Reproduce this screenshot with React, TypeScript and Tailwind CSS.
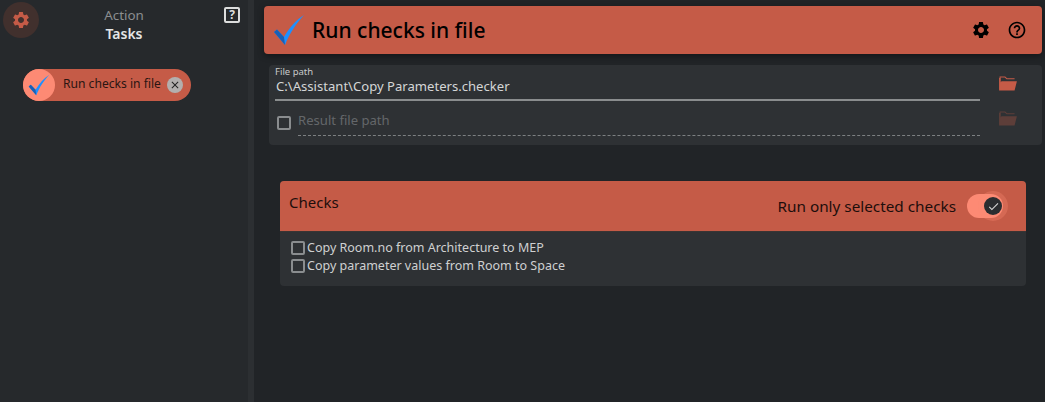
import React from "react";
import { MdSettings, MdHelpOutline, MdClose, MdCheck } from "react-icons/md";

const font = "font-['Noto_Sans','Open_Sans',sans-serif]";

const BlueCheck = ({ className }: { className: string }) => (
  <svg viewBox="0 0 32 32" className={className}>
    <path d="M1 18 L4 15.5 L11 23 C16 14 23 6 31 1 C24 9 17 18 12 31 Z" fill="#1e90ff" />
    <path d="M1 18 L4 15.5 L11 23 L12 31 Z" fill="#1a5fb4" />
  </svg>
);

const FolderIcon = ({ className }: { className: string }) => (
  <svg viewBox="0 0 20 16" className={className} fill="currentColor">
    <path d="M1 0.5 H7 L9 2.5 H17 V3.5 H8.5 L6.5 1.5 H2 V14 H1 Z" />
    <path d="M0.5 15.5 V2 H2 V7 C2.5 5.8 3 5.5 4 5.5 H19.5 L17 15.5 Z" />
  </svg>
);

const Checkbox = ({ className }: { className: string }) => (
  <span className={`block shrink-0 rounded-[2px] border-2 border-[#8a8d8f] ${className}`} />
);

const Sidebar = () => (
  <aside className="flex h-full w-[254px] shrink-0 flex-col border-r-[6px] border-[#2c2f32] bg-[#26292c]">
    <div className="flex items-start pl-[3px] pr-[8px] pt-[2px]">
      <div className="flex h-[36px] w-[36px] items-center justify-center rounded-full bg-[#41302d]">
        <MdSettings className="text-[#c55b47]" size={20} />
      </div>
      <div className="flex-1 pr-[15px] pt-[5px] text-center">
        <div className="text-[13.4px] leading-[17px] text-[#8b8e90]">Action</div>
        <div className="text-[14px] font-semibold leading-[19px] text-[#e4e5e6]">Tasks</div>
      </div>
      <div className="mt-[5px] flex h-[16px] w-[16px] items-center justify-center rounded-[2px] border-2 border-[#dcdddd] text-[12px] font-bold leading-none text-[#dcdddd]">
        ?
      </div>
    </div>
    <div className="ml-[23px] mt-[26px] flex h-[32px] w-[168px] items-center rounded-full bg-[#c55b47]">
      <div className="flex h-[32px] w-[32px] shrink-0 items-center justify-center rounded-full bg-[#fd8a74]">
        <BlueCheck className="h-[22px] w-[22px]" />
      </div>
      <span className="mb-[2px] ml-[8px] whitespace-nowrap text-[12.1px] leading-[18px] text-[#2a1512]">Run checks in file</span>
      <span className="ml-[6px] flex h-[16px] w-[16px] shrink-0 items-center justify-center rounded-full bg-[#b3afae] text-[#222]">
        <MdClose size={12} />
      </span>
    </div>
  </aside>
);

const PathPanel = () => (
  <section className="ml-[5px] mr-[3px] mt-[11px] flex h-[80px] rounded-[4px] bg-[#2e3134] pl-[6px]">
    <div className="w-[705px] pt-[1px]">
      <div className="text-[9.5px] leading-[12px] text-[#c9cacb]">File path</div>
      <div className="h-[23px] border-b-2 border-[#8a8d8e] pl-[1px] text-[13.1px] leading-[16px] text-[#d5d6d6]">
        C:\Assistant\Copy Parameters.checker
      </div>
      <div className="mt-[9px] flex items-center">
        <Checkbox className="ml-[2px] h-[14px] w-[14px]" />
        <div className="ml-[7px] h-[26px] flex-1 border-b border-dashed border-[#7d8082] text-[13.1px] leading-[20px] text-[#64676a]">
          Result file path
        </div>
      </div>
    </div>
    <div className="flex flex-col pl-[18px] pt-[11px]">
      <FolderIcon className="h-[15px] w-[20px] text-[#c55b47]" />
      <FolderIcon className="mt-[20px] h-[15px] w-[20px] text-[#5d3e39]" />
    </div>
  </section>
);

const ChecksPanel = () => (
  <section className="ml-[16px] mr-[19px] mt-[36px] overflow-hidden rounded-[4px] bg-[#2e3134]">
    <div className="flex h-[51px] items-start justify-between border-b border-[#3a3433] bg-[#c55b47] pl-[9px] pr-[23px]">
      <span className="mt-[11px] text-[15px] leading-[20px] text-[#1d0e0c]">Checks</span>
      <div className="mt-[13px] flex items-center">
        <span className="text-[15.3px] leading-[20px] text-[#1d0e0c]">Run only selected checks</span>
        <div className="relative ml-[11px] h-[24px] w-[36px] rounded-full bg-[#fd8a74]">
          <span className="absolute left-[11px] top-[-3px] h-[30px] w-[30px] rounded-full bg-[#fd8a74]/30" />
          <span className="absolute left-[17px] top-[3px] flex h-[18px] w-[18px] items-center justify-center rounded-full bg-[#2a2d30] text-[#d5d6d6]">
            <MdCheck size={13} />
          </span>
        </div>
      </div>
    </div>
    <div className="flex h-[54px] flex-col pl-[11px] pt-[7px] text-[12.5px] leading-[18px] text-[#cfd0d1]">
      {["Copy Room.no from Architecture to MEP", "Copy parameter values from Room to Space"].map((label) => (
        <label key={label} className="flex items-center">
          <Checkbox className="h-[14px] w-[14px]" />
          <span className="ml-[2px] whitespace-nowrap">{label}</span>
        </label>
      ))}
    </div>
  </section>
);

export default function App() {
  return (
    <div className={`flex h-[402px] w-[1045px] overflow-hidden bg-[#212427] ${font}`}>
      <Sidebar />
      <main className="ml-[10px] flex min-w-0 flex-1 flex-col pt-[6px]">
        <header className="mr-[3px] flex h-[48px] items-center rounded-[4px] bg-[#c55b47] pl-[9px] pr-[15px] shadow-[0_2px_6px_rgba(0,0,0,0.4)]">
          <BlueCheck className="h-[32px] w-[32px]" />
          <h1 className="ml-[7px] flex-1 text-[21px] font-medium leading-[28px] text-black">Run checks in file</h1>
          <MdSettings className="text-black" size={20} />
          <MdHelpOutline className="ml-[16px] text-black" size={20} />
        </header>
        <PathPanel />
        <ChecksPanel />
      </main>
    </div>
  );
}
